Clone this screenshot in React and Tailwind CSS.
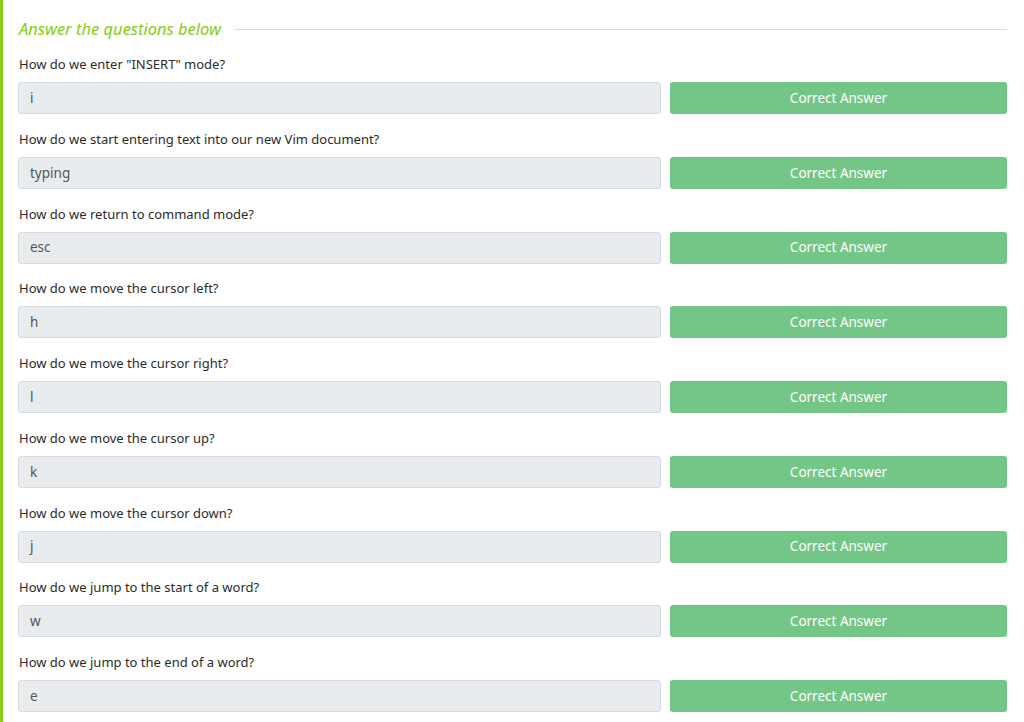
const questions = [
  { q: 'How do we enter "INSERT" mode?', a: "i" },
  { q: "How do we start entering text into our new Vim document?", a: "typing" },
  { q: "How do we return to command mode?", a: "esc" },
  { q: "How do we move the cursor left?", a: "h" },
  { q: "How do we move the cursor right?", a: "l" },
  { q: "How do we move the cursor up?", a: "k" },
  { q: "How do we move the cursor down?", a: "j" },
  { q: "How do we jump to the start of a word?", a: "w" },
  { q: "How do we jump to the end of a word?", a: "e" },
];

export default function App() {
  return (
    <div
      className="min-h-screen bg-white border-l-[3px] border-[#88cc14] pl-[15px] pr-[17px] pt-[18px] text-[#333]"
      style={{ fontFamily: '"Noto Sans", "Open Sans", sans-serif' }}
    >
      {/* Header */}
      <div className="flex items-center gap-[13px] h-[22px]">
        <span className="italic text-[#88cc14] text-[16.5px] leading-none pl-px">
          Answer the questions below
        </span>
        <div className="flex-1 h-px bg-[#dcdcdc]" />
      </div>

      {/* Questions */}
      <div className="flex flex-col">
        {questions.map((item, i) => (
          <div key={i} className="flex flex-col pt-[14px] pb-[0.75px]">
            <div className="text-[13px] leading-[20px] text-[#2b2b2b] mb-[8px] pl-px">
              {item.q}
            </div>
            <div className="flex gap-[9px]">
              <div className="flex-1 h-[32px] bg-[#e9ecef] border border-[#d6dadf] rounded-[3px] flex items-center px-[11px] text-[13.5px] text-[#555]">
                {item.a}
              </div>
              <button className="w-[337px] h-[32px] bg-[#74c686] rounded-[3px] text-white text-[13.5px] flex items-center justify-center">
                Correct Answer
              </button>
            </div>
          </div>
        ))}
      </div>
    </div>
  );
}
